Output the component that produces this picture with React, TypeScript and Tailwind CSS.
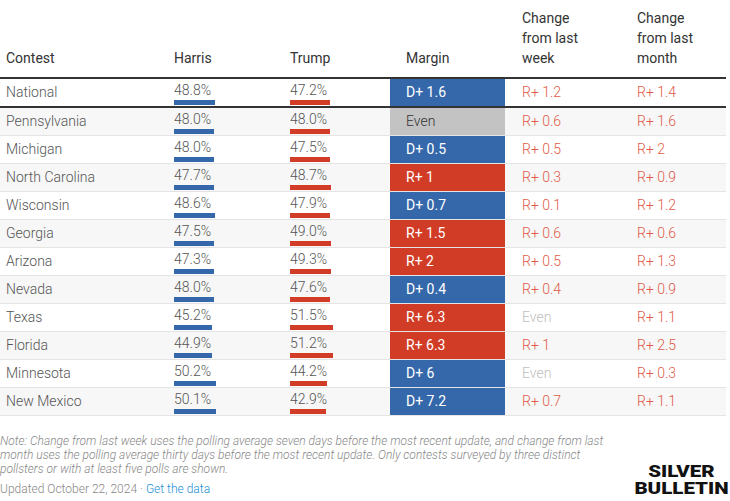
import React from "react";

type Row = {
  name: string;
  harris: number;
  trump: number;
  margin: string;
  week: string;
  month: string;
};

const ROWS: Row[] = [
  { name: "National", harris: 48.8, trump: 47.2, margin: "D+ 1.6", week: "R+ 1.2", month: "R+ 1.4" },
  { name: "Pennsylvania", harris: 48.0, trump: 48.0, margin: "Even", week: "R+ 0.6", month: "R+ 1.6" },
  { name: "Michigan", harris: 48.0, trump: 47.5, margin: "D+ 0.5", week: "R+ 0.5", month: "R+ 2" },
  { name: "North Carolina", harris: 47.7, trump: 48.7, margin: "R+ 1", week: "R+ 0.3", month: "R+ 0.9" },
  { name: "Wisconsin", harris: 48.6, trump: 47.9, margin: "D+ 0.7", week: "R+ 0.1", month: "R+ 1.2" },
  { name: "Georgia", harris: 47.5, trump: 49.0, margin: "R+ 1.5", week: "R+ 0.6", month: "R+ 0.6" },
  { name: "Arizona", harris: 47.3, trump: 49.3, margin: "R+ 2", week: "R+ 0.5", month: "R+ 1.3" },
  { name: "Nevada", harris: 48.0, trump: 47.6, margin: "D+ 0.4", week: "R+ 0.4", month: "R+ 0.9" },
  { name: "Texas", harris: 45.2, trump: 51.5, margin: "R+ 6.3", week: "Even", month: "R+ 1.1" },
  { name: "Florida", harris: 44.9, trump: 51.2, margin: "R+ 6.3", week: "R+ 1", month: "R+ 2.5" },
  { name: "Minnesota", harris: 50.2, trump: 44.2, margin: "D+ 6", week: "Even", month: "R+ 0.3" },
  { name: "New Mexico", harris: 50.1, trump: 42.9, margin: "D+ 7.2", week: "R+ 0.7", month: "R+ 1.1" },
];

const cols = "grid grid-cols-[168px_116px_106px_115px_126px_95px]";

function Value({ v, color }: { v: number; color: string }) {
  return (
    <div className="pl-[6px] pt-[3px]">
      <div className="text-[14px] leading-[16px] font-light text-[#555]">{v.toFixed(1)}%</div>
      <div className={`mt-[2px] h-[5px] ${color}`} style={{ width: `${Math.round(v * 0.84)}px` }} />
    </div>
  );
}

function marginCls(m: string) {
  if (m === "Even") return "bg-[#c3c3c3] text-[#333] font-light";
  if (m.startsWith("D")) return "bg-[#3568aa] text-white";
  return "bg-[#d13c26] text-white";
}

function Change({ t, pad }: { t: string; pad: string }) {
  return (
    <div className={`flex items-center ${pad} font-light ${t === "Even" ? "text-[#bdbdbd]" : "text-[#df5b48]"}`}>
      {t}
    </div>
  );
}

export default function App() {
  return (
    <div className="w-[730px] h-[501px] bg-white font-['Roboto',sans-serif] text-[14px] overflow-hidden">
      <div className="w-[726px]">
        {/* Header */}
        <div className={`${cols} h-[79px] border-b-2 border-[#333] text-[#333] leading-[20px] items-end pb-[9px]`}>
          <div className="pl-[6px]">Contest</div>
          <div className="pl-[6px]">Harris</div>
          <div className="pl-[6px]">Trump</div>
          <div className="pl-[16px]">Margin</div>
          <div className="pl-[17px]">Change<br />from last<br />week</div>
          <div className="pl-[6px]">Change<br />from last<br />month</div>
        </div>

        {ROWS.map((r, i) => (
          <div
            key={r.name}
            className={`${cols} ${
              i === 0 ? "h-[29px] border-b-2 border-[#333]" : "h-[28px] border-b border-[#e4e4e4]"
            } ${i % 2 === 1 ? "bg-[#f7f7f7]" : "bg-white"}`}
          >
            <div className="flex items-center pl-[6px] font-light text-[#555]">{r.name}</div>
            <Value v={r.harris} color="bg-[#3568aa]" />
            <Value v={r.trump} color="bg-[#d13c26]" />
            <div className={`flex items-center pl-[16px] ${marginCls(r.margin)}`}>{r.margin}</div>
            <Change t={r.week} pad="pl-[17px]" />
            <Change t={r.month} pad="pl-[6px]" />
          </div>
        ))}
      </div>

      {/* Footer */}
      <div className="mt-[18px] flex items-end justify-between">
        <div className="text-[12px] leading-[14px] text-[#888] font-light">
          <p className="italic">
            Note: Change from last week uses the polling average seven days before the most recent update, and change from last
            <br />
            month uses the polling average thirty days before the most recent update. Only contests surveyed by three distinct
            <br />
            pollsters or with at least five polls are shown.
          </p>
          <p className="mt-[6px]">
            Updated October 22, 2024 · <span className="text-[#1c8fd6]">Get the data</span>
          </p>
        </div>
        <div className="mr-[1px] -mb-[1px] text-center font-black text-[16px] leading-[17px] text-[#111] scale-x-[1.28] origin-right">
          SILVER
          <br />
          BULLETIN
        </div>
      </div>
    </div>
  );
}
